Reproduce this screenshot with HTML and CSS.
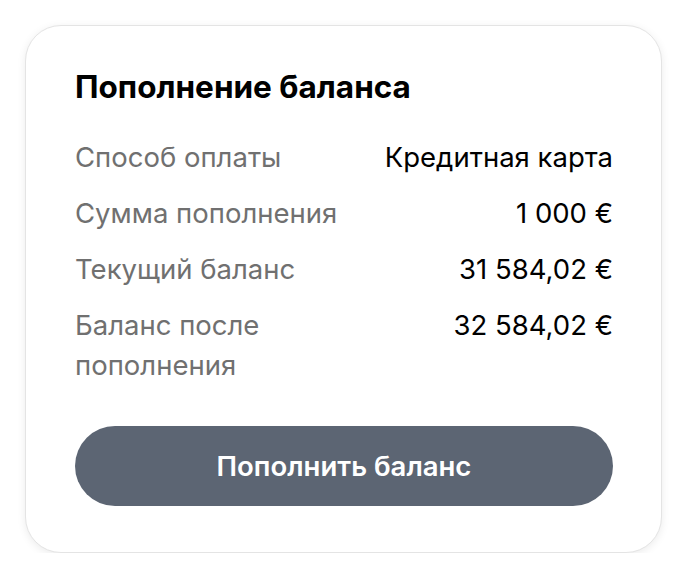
FILE: index.html
```html
<!DOCTYPE html>
<html lang="ru">
<head>
  <meta charset="UTF-8" />
  <meta name="viewport" content="width=device-width, initial-scale=1.0" />
  <title>Пополнение баланса</title>
  <link rel="stylesheet" href="styles.css">
</head>
<body>
  <div class="card">
    <h2 class="card-title">Пополнение баланса</h2>

    <div class="details">
      <div class="row">
        <div class="label">Способ оплаты</div>
        <div class="value">Кредитная карта</div>
      </div>
      <div class="row">
        <div class="label">Сумма пополнения</div>
        <div class="value">1 000 €</div>
      </div>
      <div class="row">
        <div class="label">Текущий баланс</div>
        <div class="value">31 584,02 €</div>
      </div>
      <div class="row">
        <div class="label">Баланс после пополнения</div>
        <div class="value">32 584,02 €</div>
      </div>
    </div>

    <button class="topup">Пополнить баланс</button>
  </div>
</body>
</html>
```

FILE: styles.css
```css
* {
  box-sizing: border-box;
}

body {
  margin: 0;
  padding: 25px 26px 0 25px;
  background: #fff;
  font-family: Inter, "Noto Sans", sans-serif;
  color: #000;
}

.card {
  background: #fff;
  border: 1px solid #e4e4e4;
  border-radius: 36px;
  box-shadow: 0 2px 8px rgba(0, 0, 0, 0.08);
  padding: 43px 48px 46px 49px;
  height: 528px;
}

.card-title {
  margin: 0 0 32px;
  font-size: 31.5px;
  line-height: 36px;
  font-weight: 700;
}

.details {
  display: flex;
  flex-direction: column;
  gap: 16px;
}

.row {
  display: flex;
  justify-content: space-between;
  gap: 24px;
  font-size: 27.5px;
  line-height: 40px;
}

.label {
  color: #707070;
  max-width: 270px;
}

.value {
  text-align: right;
  white-space: nowrap;
}

.topup {
  display: block;
  width: 100%;
  height: 80px;
  margin-top: 41px;
  border: none;
  border-radius: 40px;
  background: #5c6573;
  color: #fff;
  font-family: inherit;
  font-size: 27.5px;
  font-weight: 600;
  cursor: pointer;
}
```
